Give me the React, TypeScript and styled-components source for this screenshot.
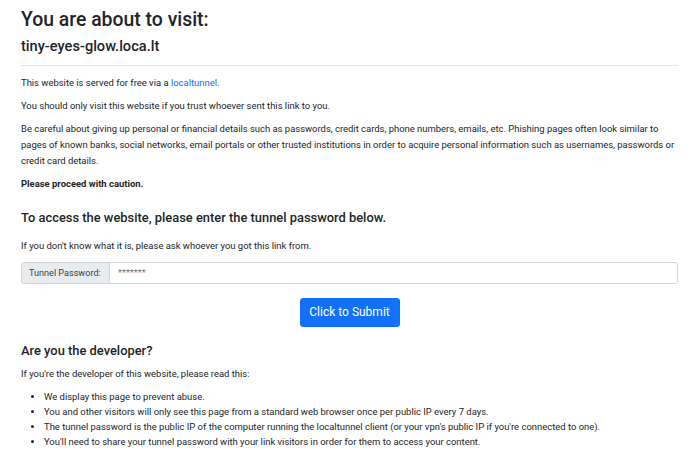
import React from "react";
import styled, { createGlobalStyle } from "styled-components";

const Global = createGlobalStyle`
  html, body { margin: 0; padding: 0; background: #fff; }
  body {
    font-family: Roboto, "Liberation Sans", sans-serif;
    color: #212529;
    font-size: 9.45px;
    line-height: 16px;
  }
  * { box-sizing: border-box; }
`;

const Page = styled.div`
  padding: 7px 22px 0 21px;
`;

const Title = styled.h2`
  margin: 0;
  font-size: 19.4px;
  font-weight: 500;
  line-height: 26px;
`;

const Domain = styled.h4`
  margin: 2px 0 0;
  font-size: 14.6px;
  font-weight: 500;
  line-height: 22px;
`;

const Rule = styled.hr`
  margin: 8px 0 9px;
  border: 0;
  border-top: 1px solid #e6e6e6;
`;

const P = styled.p`
  margin: 0 0 7px;
  font-size: 9.45px;
  line-height: 16px;
`;

const Link = styled.a`
  color: #0d6efd;
  text-decoration: none;
`;

const Section = styled.h5<{ $top: number; $bottom: number }>`
  margin: ${(p) => p.$top}px 0 ${(p) => p.$bottom}px;
  font-size: 12.9px;
  font-weight: 500;
  line-height: 18px;
`;

const InputGroup = styled.div`
  display: flex;
  height: 21.5px;
  margin-top: 8.5px;
  border: 1px solid #ced4da;
  border-radius: 3px;
  overflow: hidden;
`;

const Addon = styled.span`
  display: flex;
  align-items: center;
  width: 88px;
  padding: 0 0 0 7px;
  background: #e9ecef;
  border-right: 1px solid #ced4da;
  font-size: 9.1px;
  color: #3a3f44;
  white-space: nowrap;
`;

const Field = styled.input`
  flex: 1;
  min-width: 0;
  border: 0;
  outline: none;
  padding: 0 8px;
  font-family: inherit;
  font-size: 9.2px;
  color: #495057;
  background: #fff;
  &::placeholder {
    color: #6c757d;
    opacity: 1;
  }
`;

const ButtonRow = styled.div`
  display: flex;
  justify-content: center;
  margin-top: 14px;
`;

const Button = styled.button`
  width: 100px;
  height: 29px;
  padding: 0;
  border: 1px solid #0d6efd;
  border-radius: 3px;
  background: #1271f6;
  color: #fff;
  font-family: inherit;
  font-size: 12px;
  line-height: 1;
  white-space: nowrap;
  cursor: pointer;
`;

const List = styled.ul`
  margin: 0;
  padding-left: 23px;
`;

const Item = styled.li`
  font-size: 9.45px;
  line-height: 15px;
`;

export default function App() {
  return (
    <>
      <Global />
      <Page>
        <Title>You are about to visit:</Title>
        <Domain>tiny-eyes-glow.loca.lt</Domain>
        <Rule />
        <P>
          This website is served for free via a <Link href="#">localtunnel</Link>.
        </P>
        <P>You should only visit this website if you trust whoever sent this link to you.</P>
        <P>
          Be careful about giving up personal or financial details such as passwords, credit cards,
          phone numbers, emails, etc. Phishing pages often look similar to pages of known banks,
          social networks, email portals or other trusted institutions in order to acquire personal
          information such as usernames, passwords or credit card details.
        </P>
        <P>
          <strong>Please proceed with caution.</strong>
        </P>
        <Section $top={16.5} $bottom={11}>
          To access the website, please enter the tunnel password below.
        </Section>
        <P>If you don't know what it is, please ask whoever you got this link from.</P>
        <InputGroup>
          <Addon>Tunnel Password:</Addon>
          <Field type="password" placeholder="*******" />
        </InputGroup>
        <ButtonRow>
          <Button>Click to Submit</Button>
        </ButtonRow>
        <Section $top={15} $bottom={6}>
          Are you the developer?
        </Section>
        <P>If you're the developer of this website, please read this:</P>
        <List>
          <Item>We display this page to prevent abuse.</Item>
          <Item>
            You and other visitors will only see this page from a standard web browser once per
            public IP every 7 days.
          </Item>
          <Item>
            The tunnel password is the public IP of the computer running the localtunnel client (or
            your vpn's public IP if you're connected to one).
          </Item>
          <Item>
            You'll need to share your tunnel password with your link visitors in order for them to
            access your content.
          </Item>
        </List>
      </Page>
    </>
  );
}
